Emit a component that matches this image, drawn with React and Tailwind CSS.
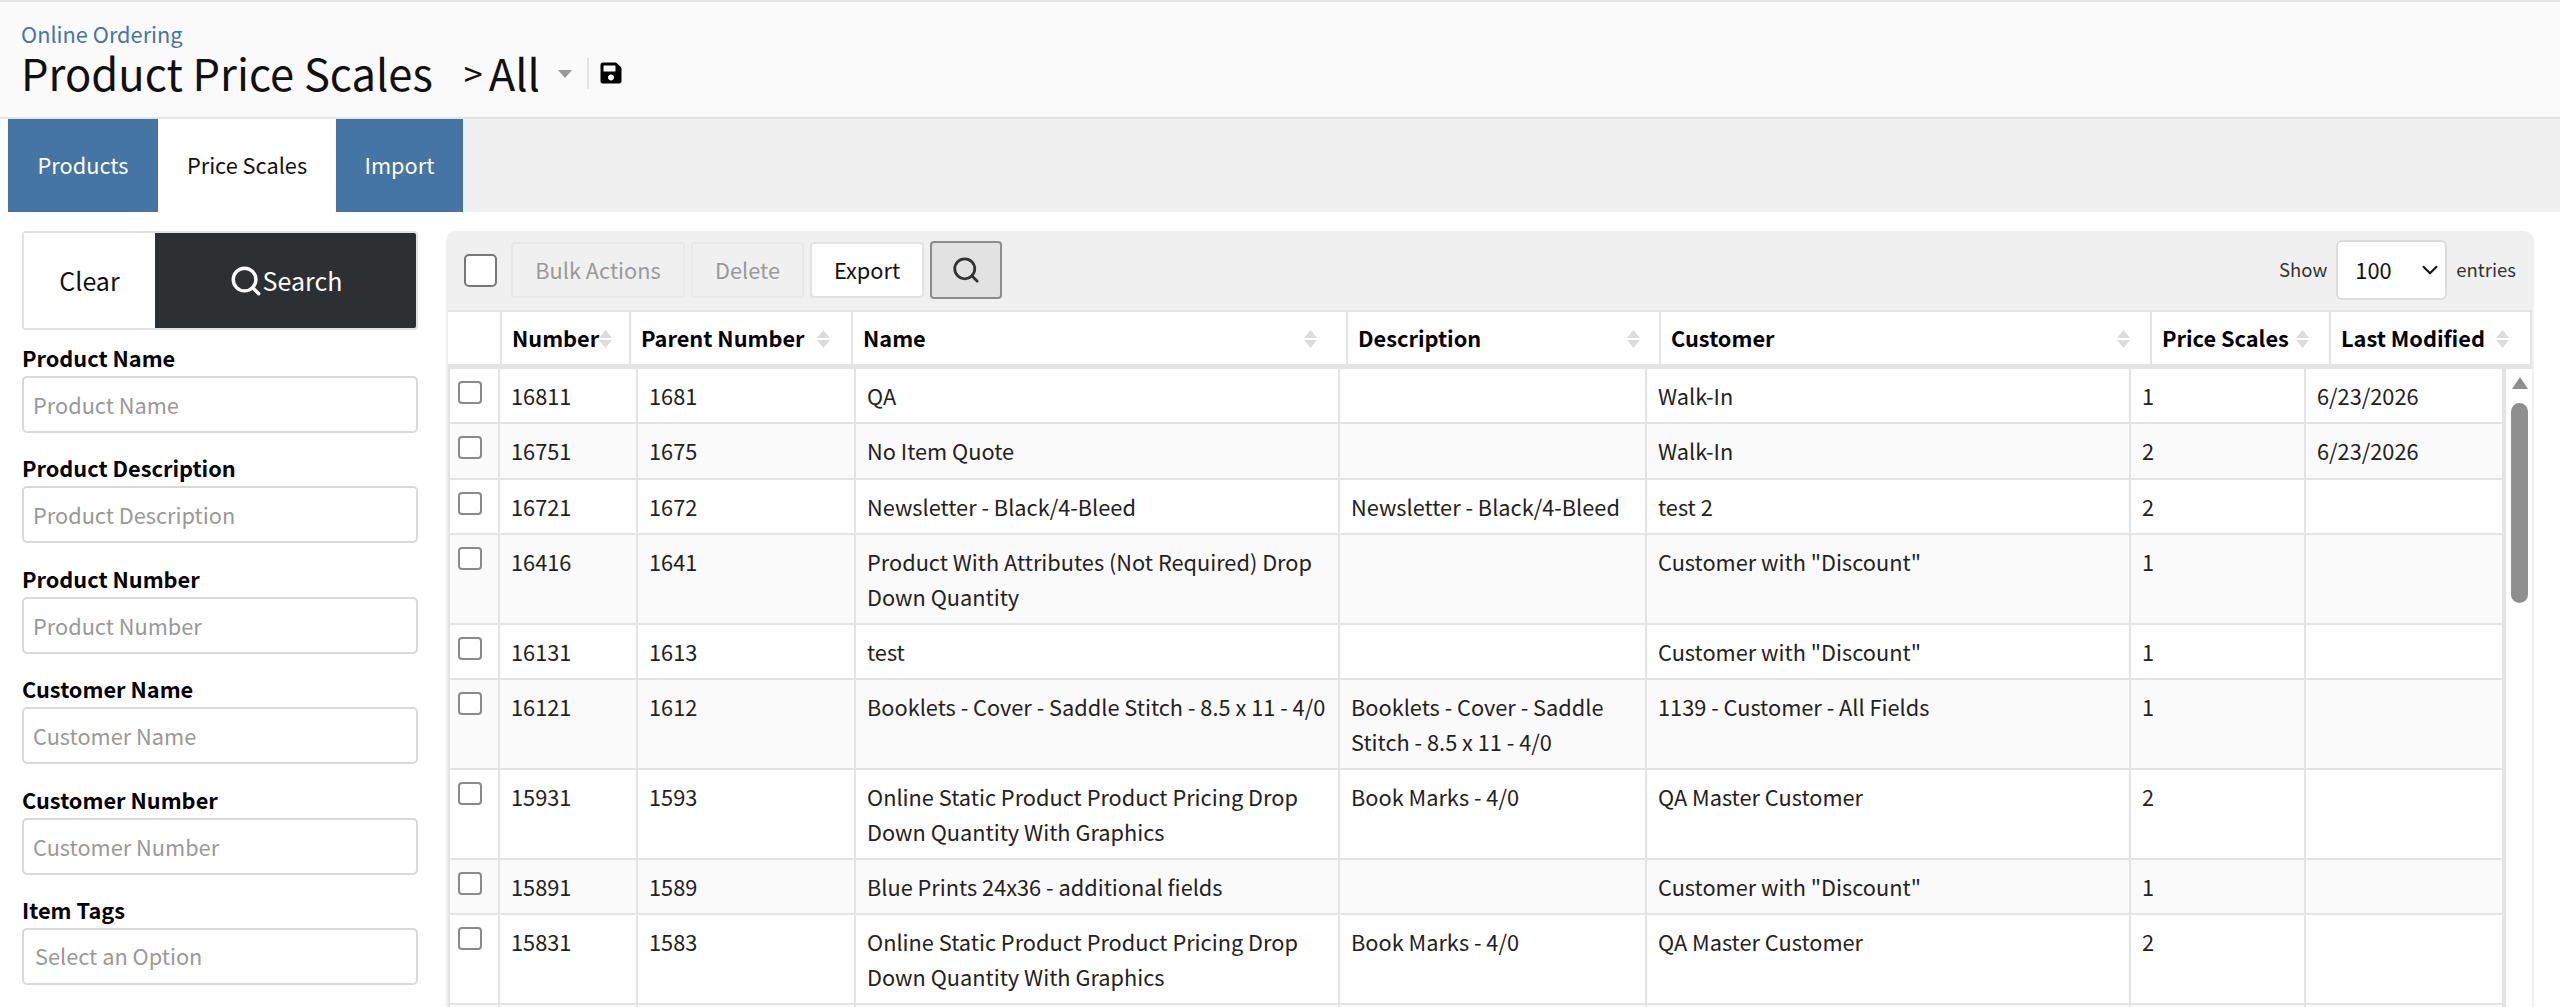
import React from 'react';
import { ChevronDown, Search } from 'lucide-react';
import { FaSave } from 'react-icons/fa';

const filters = [
  { label: 'Product Name' },
  { label: 'Product Description' },
  { label: 'Product Number' },
  { label: 'Customer Name' },
  { label: 'Customer Number' },
];

const rows = [
  ['16811', '1681', 'QA', '', 'Walk-In', '1', '6/23/2026'],
  ['16751', '1675', 'No Item Quote', '', 'Walk-In', '2', '6/23/2026'],
  ['16721', '1672', 'Newsletter - Black/4-Bleed', 'Newsletter - Black/4-Bleed', 'test 2', '2', ''],
  ['16416', '1641', 'Product With Attributes (Not Required) Drop Down Quantity', '', 'Customer with "Discount"', '1', ''],
  ['16131', '1613', 'test', '', 'Customer with "Discount"', '1', ''],
  ['16121', '1612', 'Booklets - Cover - Saddle Stitch - 8.5 x 11 - 4/0', 'Booklets - Cover - Saddle Stitch - 8.5 x 11 - 4/0', '1139 - Customer - All Fields', '1', ''],
  ['15931', '1593', 'Online Static Product Product Pricing Drop Down Quantity With Graphics', 'Book Marks - 4/0', 'QA Master Customer', '2', ''],
  ['15891', '1589', 'Blue Prints 24x36 - additional fields', '', 'Customer with "Discount"', '1', ''],
  ['15831', '1583', 'Online Static Product Product Pricing Drop Down Quantity With Graphics', 'Book Marks - 4/0', 'QA Master Customer', '2', ''],
  ['', '', '', '', '', '', ''],
];

const SortIcon = () => (
  <svg width="13" height="18" viewBox="0 0 13 18" className="shrink-0" fill="#dcdcdc">
    <path d="M6.5 0 L13 8 H0 Z" />
    <path d="M0 10 H13 L6.5 18 Z" />
  </svg>
);

const headers = [
  { label: 'Number', width: 'w-[129px]', pad: 'pr-[19px]' },
  { label: 'Parent Number', width: 'w-[222px]', pad: 'pr-[21px]' },
  { label: 'Name', width: 'w-[495px]', pad: 'pr-[29px]' },
  { label: 'Description', width: 'w-[313px]', pad: 'pr-[19px]' },
  { label: 'Customer', width: 'w-[491px]', pad: 'pr-[20px]' },
  { label: 'Price Scales', width: 'w-[179px]', pad: 'pr-[20px]' },
  { label: 'Last Modified', width: 'w-[201px]', pad: 'pr-[21px]' },
];

const App = () => {
  return (
    <div className="h-[1007px] w-[2560px] overflow-hidden bg-white font-['Noto_Sans_CJK_JP','Noto_Sans',sans-serif] text-[21.75px] text-[#212529]">
      {/* Page title */}
      <header className="h-[119px] border-y-2 border-[#e4e4e4] bg-[#fafafa] pl-[21px] pt-[17px]">
        <div className="text-[21.75px] leading-[30px] text-[#4475a5]">Online Ordering</div>
        <div className="-mt-[1px] flex items-center text-[#111]">
          <h1 className="text-[43.5px] leading-[50px]">Product Price Scales</h1>
          <span className="ml-[31px] text-[34px] leading-[50px]">&gt;</span>
          <span className="ml-[6px] text-[43.5px] leading-[50px]">All</span>
          <span className="ml-[18px] mt-[1px] h-0 w-0 border-x-[7px] border-t-[8px] border-x-transparent border-t-[#999]" />
          <span className="ml-[15px] h-[31px] border-l-2 border-[#e4e4e4]" />
          <FaSave className="ml-[10px] text-[24px] text-black" />
        </div>
      </header>

      {/* Tabs */}
      <nav className="ml-[8px] flex h-[93px] bg-[#f0f0f0] text-[21.75px]">
        <div className="flex w-[150px] items-center justify-center bg-[#4475a5] text-white">Products</div>
        <div className="flex w-[178px] items-center justify-center bg-white text-[#111]">Price Scales</div>
        <div className="flex w-[127px] items-center justify-center bg-[#4475a5] text-white">Import</div>
      </nav>

      <main className="flex pt-[19px]">
        {/* Filters */}
        <aside className="ml-[22px] w-[396px] shrink-0">
          <div className="flex h-[99px] overflow-hidden rounded-[4px] border-2 border-[#e2e2e2] text-[25px]">
            <div className="flex w-[131px] items-center justify-center bg-white text-[#111]">Clear</div>
            <div className="flex flex-1 items-center justify-center bg-[#2c3033] text-white">
              <Search size={34} strokeWidth={2.4} />
              <span>Search</span>
            </div>
          </div>
          <div className="mt-[9px] flex flex-col gap-[16.4px]">
            {filters.map((f) => (
              <div key={f.label}>
                <label className="block text-[21.75px] font-bold leading-[37px] text-black">{f.label}</label>
                <input
                  placeholder={f.label}
                  className="block h-[57px] w-full rounded-[5px] border-2 border-[#d9d9d9] bg-white px-[9px] text-[21.75px] placeholder:text-[#999]"
                />
              </div>
            ))}
            <div>
              <label className="block text-[21.75px] font-bold leading-[37px] text-black">Item Tags</label>
              <div className="flex h-[57px] w-full items-center rounded-[5px] border-2 border-[#d9d9d9] bg-white px-[11px] text-[21.75px] text-[#999]">
                Select an Option
              </div>
            </div>
          </div>
        </aside>

        {/* Results */}
        <section className="ml-[28px] w-[2088px] shrink-0 rounded-t-[10px] bg-[#f0f0f0] pl-[2px] pr-[2px]">
          <div className="flex h-[79px] items-center pb-[1px] pl-[16px] pr-[16px]">
            <span className="h-[33px] w-[33px] rounded-[5px] border-2 border-[#777] bg-white" />
            <button className="ml-[14px] h-[56px] w-[174px] rounded-[4px] border-2 border-[#e8e8e8] text-[21.75px] text-[#999]">Bulk Actions</button>
            <button className="ml-[6px] h-[56px] w-[113px] rounded-[4px] border-2 border-[#e8e8e8] text-[21.75px] text-[#999]">Delete</button>
            <button className="ml-[6px] h-[56px] w-[114px] rounded-[4px] border-2 border-[#e2e2e2] bg-white text-[21.75px] text-[#111]">Export</button>
            <button className="ml-[6px] flex h-[58px] w-[72px] items-center justify-center rounded-[4px] border-2 border-[#8c8c8c] bg-[#e2e2e2] text-[#333]">
              <Search size={30} strokeWidth={2.2} />
            </button>
            <div className="ml-auto flex items-center text-[18.5px] text-[#333]">
              <span>Show</span>
              <div className="ml-[9px] flex h-[60px] w-[111px] items-center justify-between rounded-[6px] border-2 border-[#dcdcdc] bg-white pl-[17px] pr-[2px] text-[21.75px] text-[#111]">
                100
                <ChevronDown size={26} strokeWidth={1.8} />
              </div>
              <span className="ml-[9px]">entries</span>
            </div>
          </div>

          {/* Header table */}
          <table className="w-[2084px] table-fixed border-separate border-spacing-0 bg-white">
            <colgroup>
              <col className="w-[54px]" />
              {headers.map((h) => (
                <col key={h.label} className={h.width} />
              ))}
            </colgroup>
            <thead>
              <tr className="h-[59px]">
                <th className="border-y-2 border-r-2 border-b-[5px] border-[#e4e4e4] p-0" />
                {headers.map((h) => (
                  <th key={h.label} className="border-t-2 border-r-2 border-b-[5px] border-[#e4e4e4] p-0 text-left text-[21.75px] font-bold text-black">
                    <div className={`flex items-center justify-between pl-[10px] pt-[1px] ${h.pad}`}>
                      <span>{h.label}</span>
                      <SortIcon />
                    </div>
                  </th>
                ))}
              </tr>
            </thead>
          </table>

          {/* Body table with its scrollbar */}
          <div className="flex bg-white">
            <table className="w-[2056px] table-fixed border-separate border-spacing-0 self-start border-l-2 border-[#e4e4e4]">
              <colgroup>
                <col className="w-[50px]" />
                <col className="w-[138px]" />
                <col className="w-[218px]" />
                <col className="w-[484px]" />
                <col className="w-[307px]" />
                <col className="w-[484px]" />
                <col className="w-[175px]" />
                <col className="w-[198px]" />
              </colgroup>
              <tbody>
                {rows.map((row, i) => (
                  <tr key={i} className={i % 2 === 1 ? 'bg-[#fafafa]' : 'bg-white'}>
                    <td className="border-r-2 border-b-2 border-[#e4e4e4] pl-[8px] pt-[12px] align-top">
                      <span className="block h-[23px] w-[24px] rounded-[4px] border-2 border-[#8a8a8a] bg-white" />
                    </td>
                    {row.map((cell, j) => (
                      <td key={j} className="h-[55px] border-r-2 border-b-2 border-[#e4e4e4] pb-[9px] pl-[11px] pr-[9px] pt-[10px] align-top leading-[34.4px] text-[#222]">
                        {cell}
                      </td>
                    ))}
                  </tr>
                ))}
              </tbody>
            </table>
            <div className="flex w-[28px] shrink-0 flex-col items-center border-l-2 border-[#e4e4e4] bg-white pl-[1px]">
              <span className="mt-[8px] h-0 w-0 border-x-[8px] border-b-[12px] border-x-transparent border-b-[#8f8f8f]" />
              <span className="mt-[14px] h-[200px] w-[17px] rounded-full bg-[#8f8f8f]" />
            </div>
          </div>
        </section>
      </main>
    </div>
  );
};

export default App;
